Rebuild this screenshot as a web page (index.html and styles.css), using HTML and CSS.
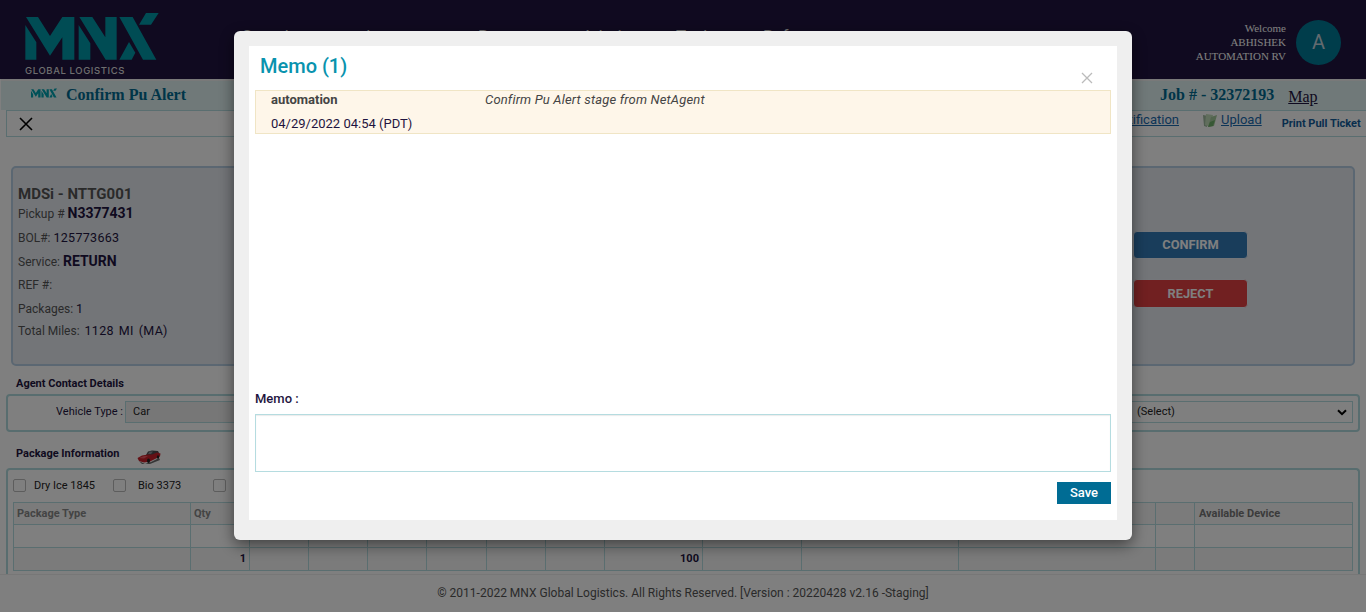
FILE: index.html
```html
<!DOCTYPE html>
<html lang="en">
<head>
<meta charset="utf-8">
<title>Confirm Pu Alert</title>
<link rel="stylesheet" href="styles.css">
</head>
<body>
<div class="page">
  <header class="header">
    <div class="brand">
      <svg class="brand-logo" viewBox="75 39 400 141"><use href="#mnx"/></svg>
      <div class="brand-sub">GLOBAL LOGISTICS</div>
    </div>
    <nav class="nav"><span class="n1">Search</span><span class="n2">Inventory</span><span class="n3">Reports</span><span class="n4">Admin</span><span class="n5">Task</span><span class="n6">Ref</span></nav>
    <div class="user">Welcome<br>ABHISHEK<br>AUTOMATION RV</div>
    <div class="avatar">A</div>
  </header>
  <div class="titlebar">
    <svg class="mini-logo" viewBox="75 39 400 141"><use href="#mnx"/></svg>
    <h1 class="title">Confirm Pu Alert</h1>
    <span class="job">Job # - 32372193</span>
    <a class="map">Map</a>
  </div>
  <div class="toolbar">
    <svg class="close-x" viewBox="0 0 14 14"><path d="M1 1L13 13M13 1L1 13"/></svg>
    <a class="link notif">Notification</a>
    <svg class="upload-icon" viewBox="0 0 15 14"><path d="M0 1L5 2L4 13L1 12Z" fill="#9fb89f"/><path d="M3 0L10 1L7 13L2 11Z" fill="#c2dcba"/><path d="M8 3L14 1L11 12L5 13Z" fill="#a5cb9d"/><path d="M7 8L12 6L10 12L5 13Z" fill="#6fb06a"/></svg>
    <a class="link upload">Upload</a>
    <a class="print">Print Pull Ticket</a>
  </div>
  <section class="panel">
    <div class="info">
      <div class="r1">MDSi - NTTG001</div>
      <div class="r2">Pickup # <b>N3377431</b></div>
      <div class="r3">BOL#: <span>125773663</span></div>
      <div class="r4">Service: <b>RETURN</b></div>
      <div class="r5">REF #:</div>
      <div class="r6">Packages: <span>1</span></div>
      <div class="r7">Total Miles: <span class="miles">1128 MI (MA)</span></div>
    </div>
    <div class="actions">
      <button class="btn confirm">CONFIRM</button>
      <button class="btn reject">REJECT</button>
    </div>
  </section>
  <h2 class="heading agent">Agent Contact Details</h2>
  <section class="box agent-box">
    <span class="label">Vehicle Type :</span>
    <div class="field vehicle">Car</div>
    <div class="field select">(Select)<svg class="chev" viewBox="0 0 10 7"><path d="M1 1.2L5 5.2L9 1.2"/></svg></div>
  </section>
  <div class="package-row">
    <h2 class="heading">Package Information</h2>
    <svg class="car" viewBox="0 0 24 16"><path d="M2 12L8 15L14 13L22 9L23 11L13 15L5 15Z" fill="#6d6d6d"/><path d="M9 6L11 2.500L15 1.500L21 2L22 4L17 6Z" fill="#4c4c50"/><path d="M0.500 9L5 6.500L11 5.500L15 5.500L20 3.500L23.500 4.500L23 7.500L19 9.500L13 12.500L7 13.500L2 12Z" fill="#c8202a"/><path d="M2 9L7 7L11 7L7 9.500Z" fill="#ee5560"/><path d="M11 5L12.500 2.500L16 2.500L14 5Z" fill="#8d8f98"/><ellipse cx="11.500" cy="11.800" rx="1.500" ry="2.200" fill="#222"/><ellipse cx="21" cy="8" rx="1.200" ry="1.800" fill="#222"/></svg>
  </div>
  <section class="box package-box">
    <div class="checks"><i class="ck"></i><span class="c1">Dry Ice 1845</span><i class="ck"></i><span class="c2">Bio 3373</span><i class="ck"></i></div>
    <div class="grid">
      <div class="row head"><i>Package Type</i><i>Qty</i><i></i><i></i><i></i><i></i><i></i><i></i><i></i><i></i><i></i><i></i><i></i><i>Available Device</i></div>
      <div class="row"><i></i><i></i><i></i><i></i><i></i><i></i><i></i><i></i><i></i><i></i><i></i><i></i><i></i><i></i></div>
      <div class="row total"><i></i><i>1</i><i></i><i></i><i></i><i></i><i></i><i></i><i>100</i><i></i><i></i><i></i><i></i><i></i></div>
    </div>
  </section>
  <footer class="footer">© 2011-2022 MNX Global Logistics. All Rights Reserved. [Version : 20220428 v2.16 -Staging]</footer>
</div>
<div class="backdrop">
  <div class="modal">
    <div class="modal-body">
      <div class="modal-head">
        <h2 class="modal-title">Memo (1)</h2>
        <svg class="modal-close" viewBox="0 0 12 12"><path d="M1 1L11 11M11 1L1 11"/></svg>
      </div>
      <div class="memo">
        <div class="memo-by"><b>automation</b><span>04/29/2022 04:54 (PDT)</span></div>
        <em class="memo-text">Confirm Pu Alert stage from NetAgent</em>
      </div>
      <label class="memo-label">Memo :</label>
      <div class="memo-input"></div>
      <button class="save">Save</button>
    </div>
  </div>
</div>
<svg class="defs" width="0" height="0"><symbol id="mnx" overflow="visible"><path d="M77 51H113L149 108L186 51H222V179H186V112L149 167ZM75 75L108 127V179H75ZM237 51H276L315 112V51H349V179H316ZM235 75L270 130V179H235ZM357 51H397L468 179H428ZM437 39H475L452 74H416ZM386 126L405 158L394 179H357Z"/></symbol></svg>
</body>
</html>
```

FILE: styles.css
```css
* { box-sizing: border-box; }
body { margin: 0; background: #fff; color: #1e1440; font: 12px Roboto, sans-serif; }
i { font-style: normal; }
h1, h2 { margin: 0; }
.page { width: 1366px; height: 612px; overflow: hidden; display: flex; flex-direction: column; }
.page > * { flex: none; }
.defs { position: absolute; }

.header { height: 79px; background: #201440; display: flex; align-items: flex-start; padding-left: 25px; }
.brand { width: 215px; padding-top: 13px; color: #ddd; }
.brand-logo { display: block; width: 134px; height: 47px; fill: #0098a8; }
.brand-sub { font: 500 9.5px/12px Inter, sans-serif; letter-spacing: .6px; margin-top: 5px; }
.nav { display: flex; padding: 25px 0 0 2px; color: #ddd; font-size: 17px; line-height: 22px; width: 900px; }
.n1 { width: 124px; }
.n2 { width: 112px; }
.n3 { width: 104px; }
.n4 { width: 94px; }
.n5 { width: 87px; }
.user { width: 146px; padding-top: 21px; text-align: right; color: #fff; font: 11px/14px "Liberation Serif", serif; }
.avatar { width: 45px; height: 45px; margin: 20px 0 0 10px; border-radius: 50%; background: #007a96; color: #c5d5df; font-size: 20px; line-height: 45px; text-align: center; }

.titlebar { height: 31px; margin-left: 1px; border-top: 2px solid #f2f2f2; background: #e1f3f3; display: flex; color: #006a91; font: bold 16px/28px "Liberation Serif", serif; }
.mini-logo { width: 26px; height: 10px; margin: 7px 9px 0 30px; fill: #00a2b0; }
.title { font: inherit; width: 1094px; }
.map { margin-left: 14px; color: #1e1440; font-weight: normal; text-decoration: underline; line-height: 32px; }

.toolbar { height: 27px; margin-left: 6px; border: 1px solid #b5dce0; border-right: 0; display: flex; }
.close-x { width: 14px; height: 14px; margin: 5.5px 0 0 11.5px; fill: none; stroke: #000; stroke-width: 1.6; }
.link { color: #1a6aae; text-decoration: underline; font-size: 13px; line-height: 17px; }
.notif { width: 1146.5px; text-align: right; }
.upload-icon { width: 15px; height: 14px; margin: 3px 3px 0 24px; }
.print { color: #125c9b; font-weight: 700; font-size: 11px; line-height: 25px; margin-left: 20px; white-space: nowrap; }

.panel { width: 1344px; height: 200px; margin: 29px 0 0 11px; border: 2px solid #b7cfe4; border-radius: 5px; background: #e6eaf1; display: flex; }
.info { width: 1120px; padding: 18px 0 0 5px; color: #555; }
.info span, .info b { color: #1e1440; }
.info b { font-size: 14px; font-weight: 700; }
.info span { font-size: 12.5px; letter-spacing: .3px; }
.r1 { font-size: 15px; font-weight: 700; line-height: 16px; }
.r2 { line-height: 22px; }
.r3 { line-height: 25px; }
.r4 { line-height: 20px; }
.r5 { line-height: 27px; }
.r6 { line-height: 20px; }
.r7 { line-height: 24px; }
.info .miles { margin-left: 2px; word-spacing: 1.6px; }
.actions { display: flex; flex-direction: column; gap: 20px; padding-top: 63px; }
.btn { width: 115px; height: 28px; padding: 0 0 1px; border: 1px solid #e8edf4; border-radius: 4px; color: #fff; font: bold 12.8px Roboto, sans-serif; }
.confirm { background: #337ab7; }
.reject { background: #e24042; height: 29px; }

.heading { font-size: 11px; font-weight: 700; line-height: 16px; }
.agent { margin: 10px 0 0 16px; }
.box { width: 1354px; margin-left: 6px; border: 2px solid #b1dade; border-radius: 4px; }
.agent-box { height: 38px; margin-top: 2px; display: flex; padding-top: 5px; font-size: 11px; }
.label { width: 115px; text-align: right; line-height: 21px; }
.field { border: 1px solid #b5dce0; height: 22px; padding-left: 7px; line-height: 20px; color: #222; }
.vehicle { width: 400px; margin-left: 2px; background: #eee; }
.select { width: 400px; margin-left: 428px; padding: 0 5px 0 183px; display: flex; justify-content: space-between; align-items: center; }
.chev { width: 10px; height: 7px; fill: none; stroke: #000; stroke-width: 2; }
.package-row { display: flex; padding: 14px 0 0 16px; height: 36px; }
.car { width: 24px; height: 16px; margin: 3px 0 0 18px; }
.package-box { height: 106px; border-bottom: 0; border-radius: 4px 4px 0 0; padding: 9px 0 0 5px; }
.checks { display: flex; height: 23px; font-size: 11px; line-height: 14px; color: #222; }
.ck { width: 13px; height: 13px; border: 1px solid #bbb; border-radius: 2px; }
.c1 { width: 87px; padding-left: 8px; }
.c2 { width: 87px; padding-left: 12px; }
.grid { width: 1340px; border: 1px solid #b5dce0; border-width: 1px 0 0 1px; }
.row { display: grid; grid-template-columns: 177px 59px 59px 59px 59px 60px 59px 59px 98px 99px 157px 197px 39px 158px; height: 23px; line-height: 21px; font-size: 11px; font-weight: 700; }
.row i { border: solid #b5dce0; border-width: 0 1px 1px 0; padding: 0 3px; }
.head { height: 22px; background: #f7f7f7; color: #888; }
.head i:last-child { color: #777; padding-left: 4px; }
.total { background: #f7f7f7; text-align: right; }
.footer { height: 38px; border-top: 1px solid #eee; text-align: center; color: #555; line-height: 36px; background: #fff; }

.backdrop { position: fixed; inset: 0; background: rgba(0, 0, 0, .5); padding: 31px 0 0 234px; }
.modal { width: 898px; height: 509px; padding: 15px 15px 20px; background: #efefef; border-radius: 6px; box-shadow: 0 5px 15px rgba(0, 0, 0, .5); }
.modal-body { height: 474px; background: #fff; padding: 0 6px; display: flex; flex-direction: column; }
.modal-head { display: flex; justify-content: space-between; height: 44px; padding: 0 18px 0 5px; }
.modal-title { color: #0993ae; font-size: 20px; font-weight: 500; line-height: 40px; }
.modal-close { width: 12px; height: 12px; margin-top: 25.5px; fill: none; stroke: #bbb; stroke-width: 1.3; }
.memo { height: 44px; border: 1px solid #f0e5c5; background: #fef6e9; padding-left: 15px; display: flex; font-size: 13px; line-height: 18px; }
.memo-by { width: 214px; display: flex; flex-direction: column; gap: 6px; }
.memo-by b { color: #444; }
.memo-text { color: #444; letter-spacing: .17px; }
.memo-label { margin-top: 256px; font-size: 13px; font-weight: 500; line-height: 18px; }
.memo-input { height: 58px; margin-top: 6px; border: 1px solid #b5dce0; box-shadow: inset 0 1px 1px rgba(0, 0, 0, .08); }
.save { align-self: flex-end; width: 54px; height: 22px; margin-top: 10px; padding: 0 0 1px; border: 0; background: #006c94; color: #fff; font: 500 13px Roboto, sans-serif; }
```
